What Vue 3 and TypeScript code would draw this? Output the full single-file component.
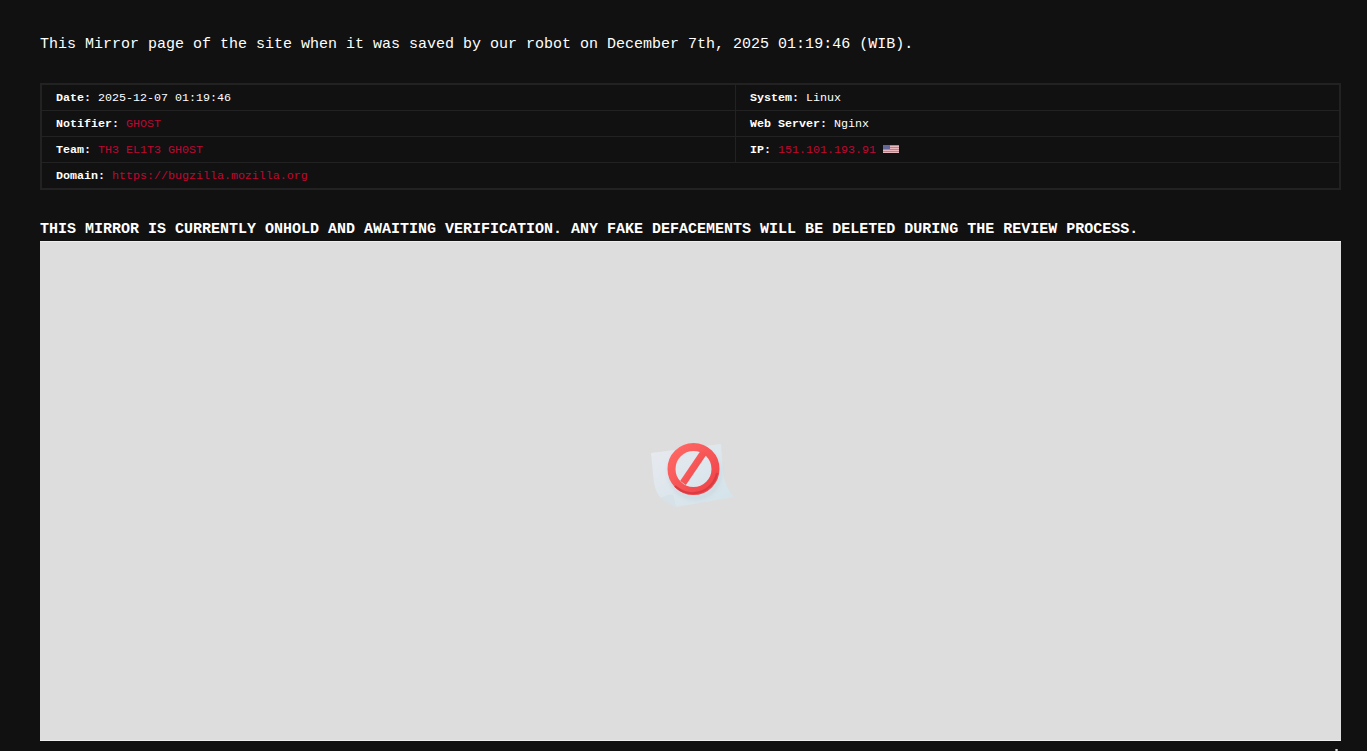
<template>
  <div class="page">
    <p class="intro">This Mirror page of the site when it was saved by our robot on December 7th, 2025 01:19:46 (WIB).</p>

    <table class="info">
      <tbody>
        <tr>
          <td class="col-left"><b>Date:</b> 2025-12-07 01:19:46</td>
          <td><b>System:</b> Linux</td>
        </tr>
        <tr>
          <td class="col-left"><b>Notifier:</b> <span class="red">GHOST</span></td>
          <td><b>Web Server:</b> Nginx</td>
        </tr>
        <tr>
          <td class="col-left"><b>Team:</b> <span class="red">TH3 EL1T3 GH0ST</span></td>
          <td>
            <b>IP:</b> <span class="red">151.101.193.91</span>
            <svg class="flag" viewBox="0 0 16 8" width="16" height="8" aria-hidden="true">
              <rect width="16" height="8" fill="#eab8bc" />
              <rect y="0" width="16" height="1" fill="#cf7a82" />
              <rect y="2" width="16" height="1" fill="#cf7a82" />
              <rect y="4" width="16" height="1" fill="#cf7a82" />
              <rect y="6" width="16" height="1" fill="#cf7a82" />
              <rect width="7" height="4" fill="#62669a" />
            </svg>
          </td>
        </tr>
        <tr>
          <td colspan="2"><b>Domain:</b> <a class="red" href="#">https://bugzilla.mozilla.org</a></td>
        </tr>
      </tbody>
    </table>

    <h1 class="notice">THIS MIRROR IS CURRENTLY ONHOLD AND AWAITING VERIFICATION. ANY FAKE DEFACEMENTS WILL BE DELETED DURING THE REVIEW PROCESS.</h1>

    <div class="frame">
      <svg class="blocked" viewBox="0 0 84 64" width="84" height="64" aria-hidden="true">
        <defs>
          <linearGradient id="paper" x1="0" y1="0" x2="1" y2="1">
            <stop offset="0" stop-color="#e8eaef" />
            <stop offset="1" stop-color="#d2e3ea" />
          </linearGradient>
          <linearGradient id="ring" x1="0" y1="0" x2="1" y2="1">
            <stop offset="0" stop-color="#ff6a66" />
            <stop offset="1" stop-color="#ef4248" />
          </linearGradient>
          <filter id="soft"><feGaussianBlur stdDeviation="0.5" /></filter>
          <filter id="shade"><feGaussianBlur stdDeviation="2" /></filter>
        </defs>
        <g filter="url(#soft)">
          <path d="M0 10 L70 1 L72 30 Q74 44 83 54 L25 64 L22 52 L10 55 Q5 50 3 40 Z" fill="url(#paper)" />
          <path d="M10 55 Q18 50 22 52 L25 64 Q15 60 10 55 Z" fill="#d6e2e8" />
          <circle cx="44" cy="30" r="25" fill="none" stroke="#b9c4d0" stroke-width="3" opacity="0.5" filter="url(#shade)" />
          <circle cx="42.5" cy="26" r="22" fill="none" stroke="url(#ring)" stroke-width="8" />
          <path d="M32 40 L53 9" stroke="url(#ring)" stroke-width="7" />
          <path d="M24 43 A25 25 0 0 0 66 30" fill="none" stroke="#d93a42" stroke-width="2" />
        </g>
      </svg>
    </div>

    <div class="tail"><span class="tail-mark"></span></div>
  </div>
</template>

<script setup lang="ts">
</script>

<style>
html,
body {
  background: #111;
}
</style>

<style scoped>
.page {
  height: 751px;
  overflow: hidden;
  box-sizing: border-box;
  padding: 36px 26px 0 40px;
  background: #111;
  color: #fff;
  font-family: "Liberation Mono", "DejaVu Sans Mono", monospace;
}

.intro {
  margin: 0 0 29px;
  font-size: 15px;
  line-height: 18px;
}

.info {
  width: 100%;
  table-layout: fixed;
  border-collapse: collapse;
  border: 2px solid #222;
  font-size: 11.667px;
}

.info td {
  height: 25px;
  padding: 0 14px;
  border: 1px solid #222;
  line-height: 14px;
}

.col-left {
  width: 665px;
}

.info b {
  font-weight: 700;
}

.red {
  color: #c00733;
  text-decoration: none;
}

.flag {
  margin-left: 7px;
  vertical-align: -0.5px;
}

.notice {
  margin: 31px 0 2px;
  font-size: 15px;
  line-height: 18px;
  font-weight: 700;
}

.frame {
  display: flex;
  align-items: center;
  justify-content: center;
  height: 500px;
  box-sizing: border-box;
  border-top: 1px solid #eee;
  border-bottom: 1px solid #eee;
  background: #ddd;
}

.blocked {
  margin-left: 4px;
  margin-bottom: 32px;
}

.tail {
  display: flex;
  justify-content: flex-end;
  margin-top: 8px;
  padding-right: 3px;
}

.tail-mark {
  width: 3px;
  height: 2px;
  background: linear-gradient(90deg, #2a7fa8, #ddd, #a86a2a);
}
</style>
